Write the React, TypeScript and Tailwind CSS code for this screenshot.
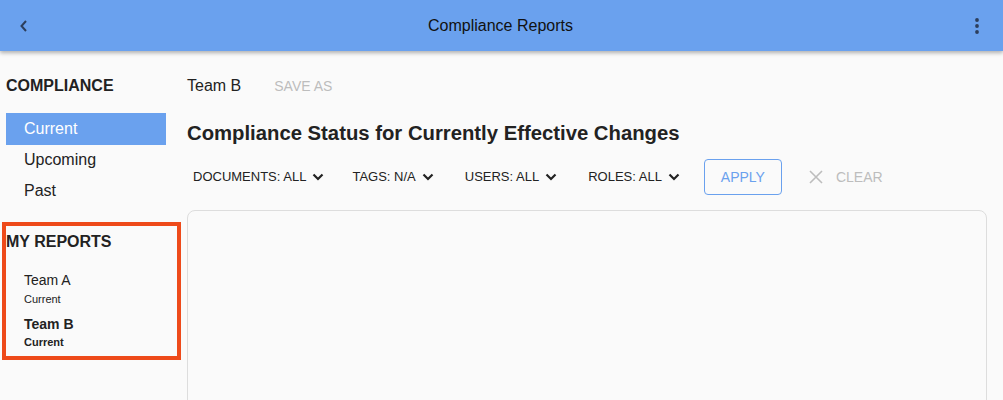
import React from "react";

const Chevron = () => (
  <svg width="12" height="8" viewBox="0 0 12 8" className="ml-[6px]">
    <path d="M1.5 1.5 L6 6 L10.5 1.5" fill="none" stroke="#222" strokeWidth="2.2" />
  </svg>
);

const Filter = ({ label, className }: { label: string; className?: string }) => (
  <div className={"flex items-center text-[13px] text-[#222] " + (className ?? "")}>
    <span>{label}</span>
    <Chevron />
  </div>
);

export default function App() {
  return (
    <div className="w-[1003px] h-[400px] overflow-hidden bg-[#fafafa] font-['Liberation_Sans',Arial,sans-serif] text-[#222]">
      <header className="relative z-10 h-[51px] bg-[#6aa1ee] flex items-center shadow-[0_2px_4px_rgba(0,0,0,0.3)]">
        <div className="w-[48px] flex justify-center">
          <svg width="10" height="14" viewBox="0 0 10 14">
            <path d="M7 2 L2.5 7 L7 12" fill="none" stroke="#2c3e5c" strokeWidth="2" />
          </svg>
        </div>
        <div className="flex-1 text-center text-[16px] text-[#111] pl-[2px]">Compliance Reports</div>
        <div className="w-[52px] flex justify-center">
          <svg width="6" height="18" viewBox="0 0 6 18">
            <circle cx="3" cy="3" r="1.9" fill="#2c3e5c" />
            <circle cx="3" cy="9" r="1.9" fill="#2c3e5c" />
            <circle cx="3" cy="15" r="1.9" fill="#2c3e5c" />
          </svg>
        </div>
      </header>
      <div className="flex">
        <aside className="w-[181px] shrink-0 pt-[26px]">
          <div className="pl-[6px] text-[16px] font-bold leading-[18px]">COMPLIANCE</div>
          <div className="mt-[18px] pl-[6px] w-[166px]">
            <div className="h-[32px] bg-[#6aa1ee] text-white text-[16px] pl-[18px] flex items-center">Current</div>
            <div className="h-[30px] text-[16px] pl-[18px] flex items-center">Upcoming</div>
            <div className="h-[31px] text-[16px] pl-[18px] flex items-center">Past</div>
          </div>
          <div className="mt-[16px] ml-[2px] w-[179px] h-[138px] border-4 border-[#ee4a1a]">
            <div className="text-[16px] font-bold leading-[18px] mt-[7px]">MY REPORTS</div>
            <div className="mt-[21px] pl-[18px]">
              <div className="text-[14px] leading-[16px]">Team A</div>
              <div className="text-[11px] leading-[13px] mt-[5px]">Current</div>
              <div className="text-[14px] leading-[16px] font-bold mt-[10px]">Team B</div>
              <div className="text-[11px] leading-[13px] font-bold mt-[4px]">Current</div>
            </div>
          </div>
        </aside>
        <main className="flex-1 pt-[26px] pl-[6px] pr-[16px]">
          <div className="flex items-center h-[18px]">
            <span className="text-[16px]">Team B</span>
            <span className="ml-[33px] text-[14px] text-[#bdbdbd]">SAVE AS</span>
          </div>
          <h1 className="mt-[27px] text-[20.3px] font-bold leading-[22px]">Compliance Status for Currently Effective Changes</h1>
          <div className="mt-[15px] flex items-center h-[36px] pl-[6px]">
            <Filter label="DOCUMENTS: ALL" />
            <Filter label="TAGS: N/A" className="ml-[28px]" />
            <Filter label="USERS: ALL" className="ml-[31px]" />
            <Filter label="ROLES: ALL" className="ml-[31px]" />
            <button className="ml-[24px] w-[78px] h-[36px] border border-[#6aa1ee] rounded-[4px] text-[#6aa1ee] text-[14px]">APPLY</button>
            <div className="ml-[26px] flex items-center text-[#bdbdbd] text-[14px]">
              <svg width="16" height="16" viewBox="0 0 16 16">
                <path d="M2 2 L14 14 M14 2 L2 14" stroke="#bdbdbd" strokeWidth="1.6" />
              </svg>
              <span className="ml-[12px]">CLEAR</span>
            </div>
          </div>
          <div className="mt-[15px] h-[300px] border border-[#dddddd] rounded-[8px]"></div>
        </main>
      </div>
    </div>
  );
}
